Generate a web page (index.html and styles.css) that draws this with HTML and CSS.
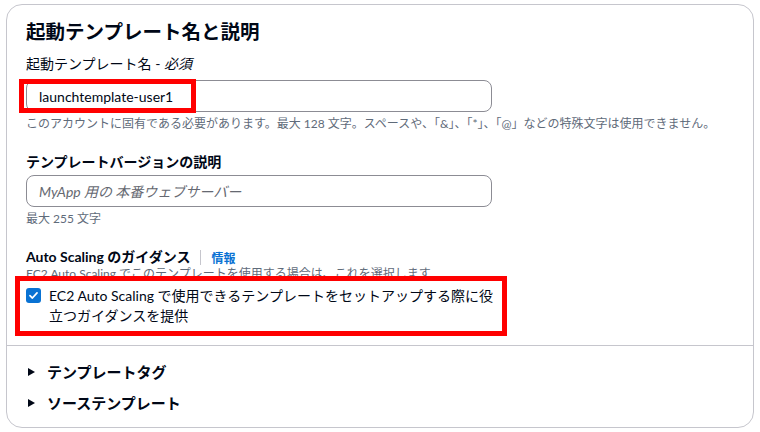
FILE: index.html
```html
<!DOCTYPE html>
<html lang="ja">

<head>
    <meta charset="UTF-8">
    <meta name="viewport" content="width=device-width, initial-scale=1.0">
    <title>起動テンプレート名と説明</title>
    <link rel="stylesheet" href="styles.css">
</head>

<body>

    <div class="page">
        <div class="card">
            <div class="card-body">
                <h2 class="title">起動テンプレート名と説明</h2>

                <div class="field first">
                    <label class="label" for="tpl-name">起動テンプレート名 - <i>必須</i></label>
                    <input class="input" id="tpl-name" type="text" value="launchtemplate-user1">
                    <p class="hint">このアカウントに固有である必要があります。最大 128 文字。スペースや、「&amp;」、「*」、「@」などの特殊文字は使用できません。</p>
                </div>

                <div class="field">
                    <label class="label strong" for="tpl-desc">テンプレートバージョンの説明</label>
                    <input class="input tight" id="tpl-desc" type="text" placeholder="MyApp 用の 本番ウェブサーバー">
                    <p class="hint">最大 255 文字</p>
                </div>

                <div class="field">
                    <div class="label-row">
                        <span class="label strong">Auto Scaling のガイダンス</span>
                        <span class="sep"></span>
                        <a class="info" href="#">情報</a>
                    </div>
                    <p class="hint desc">EC2 Auto Scaling でこのテンプレートを使用する場合は、これを選択します</p>
                    <label class="check">
                        <span class="box">
                            <svg viewBox="0 0 14 14" width="11" height="11">
                                <path d="M2.5 7.2 L5.6 10.2 L11.5 3.6" fill="none" stroke="#fff" stroke-width="2.2" stroke-linecap="round" stroke-linejoin="round"/>
                            </svg>
                        </span>
                        <span class="check-text">EC2 Auto Scaling で使用できるテンプレートをセットアップする際に役立つガイダンスを提供</span>
                    </label>
                </div>
            </div>

            <div class="expanders">
                <div class="expander"><span class="caret"></span>テンプレートタグ</div>
                <div class="expander"><span class="caret"></span>ソーステンプレート</div>
            </div>

            <!-- annotation boxes -->
            <div class="mark mark-name"></div>
            <div class="mark mark-guide"></div>
        </div>
    </div>

</body>

</html>
```

FILE: styles.css
```css
html,
body {
    margin: 0;
    padding: 0;
    background: #fff;
    font-family: 'Lato', 'Noto Sans CJK JP', sans-serif;
    color: #000716;
}

.page {
    padding: 4px 6px;
}

.card {
    position: relative;
    height: 424px;
    box-sizing: border-box;
    border: 1px solid #c6c6cd;
    border-radius: 16px;
    background: #fff;
    overflow: hidden;
}

.card-body {
    padding: 15px 20px 19px 19px;
    border-bottom: 1px solid #c6c6cd;
}

.title {
    margin: 0;
    font-size: 19.5px;
    line-height: 24px;
    font-weight: 700;
}

.field {
    margin-top: 20px;
}

.field.first {
    margin-top: 10px;
}

.label {
    display: block;
    font-size: 14px;
    line-height: 20px;
}

.label.strong {
    font-weight: 700;
}

.input {
    display: block;
    box-sizing: border-box;
    width: 466px;
    height: 32px;
    margin: 6px 0 0;
    padding: 0 12px;
    border: 1px solid #8c8c94;
    border-radius: 8px;
    font-family: inherit;
    font-size: 14px;
    color: #000716;
    background: #fff;
    outline: none;
}

.input.tight {
    margin-top: 3px;
}

.input::placeholder {
    color: #656871;
    font-style: italic;
}

.hint {
    margin: 4px 0 0;
    font-size: 12px;
    line-height: 16px;
    color: #5f6b7a;
}

.label-row {
    display: flex;
    align-items: center;
    height: 20px;
}

.sep {
    width: 1px;
    height: 15px;
    margin: 0 10px;
    background: #c6c6cd;
}

.info {
    font-size: 12px;
    font-weight: 700;
    color: #0972d3;
    text-decoration: none;
}

.desc {
    margin-top: -1px;
}

.check {
    display: flex;
    align-items: flex-start;
    margin-top: 4px;
    font-size: 14px;
    line-height: 20px;
}

.box {
    flex: none;
    display: flex;
    align-items: center;
    justify-content: center;
    width: 15px;
    height: 15px;
    margin-top: 2px;
    border-radius: 3px;
    background: #0972d3;
}

.check-text {
    margin-left: 8px;
    max-width: 446px;
}
/* Expandable sections */

.expanders {
    padding: 10px 20px 0 21px;
}

.expander {
    display: flex;
    align-items: center;
    height: 31px;
    font-size: 15px;
    font-weight: 700;
}

.caret {
    width: 0;
    height: 0;
    margin-right: 12px;
    border-left: 7px solid #000716;
    border-top: 4px solid transparent;
    border-bottom: 4px solid transparent;
}
/* Red annotation frames */

.mark {
    position: absolute;
    box-sizing: border-box;
    border: 5px solid #ff0000;
    pointer-events: none;
}

.mark-name {
    left: 12px;
    top: 74px;
    width: 177px;
    height: 34px;
}

.mark-guide {
    left: 8px;
    top: 271px;
    width: 492px;
    height: 60px;
}
```
